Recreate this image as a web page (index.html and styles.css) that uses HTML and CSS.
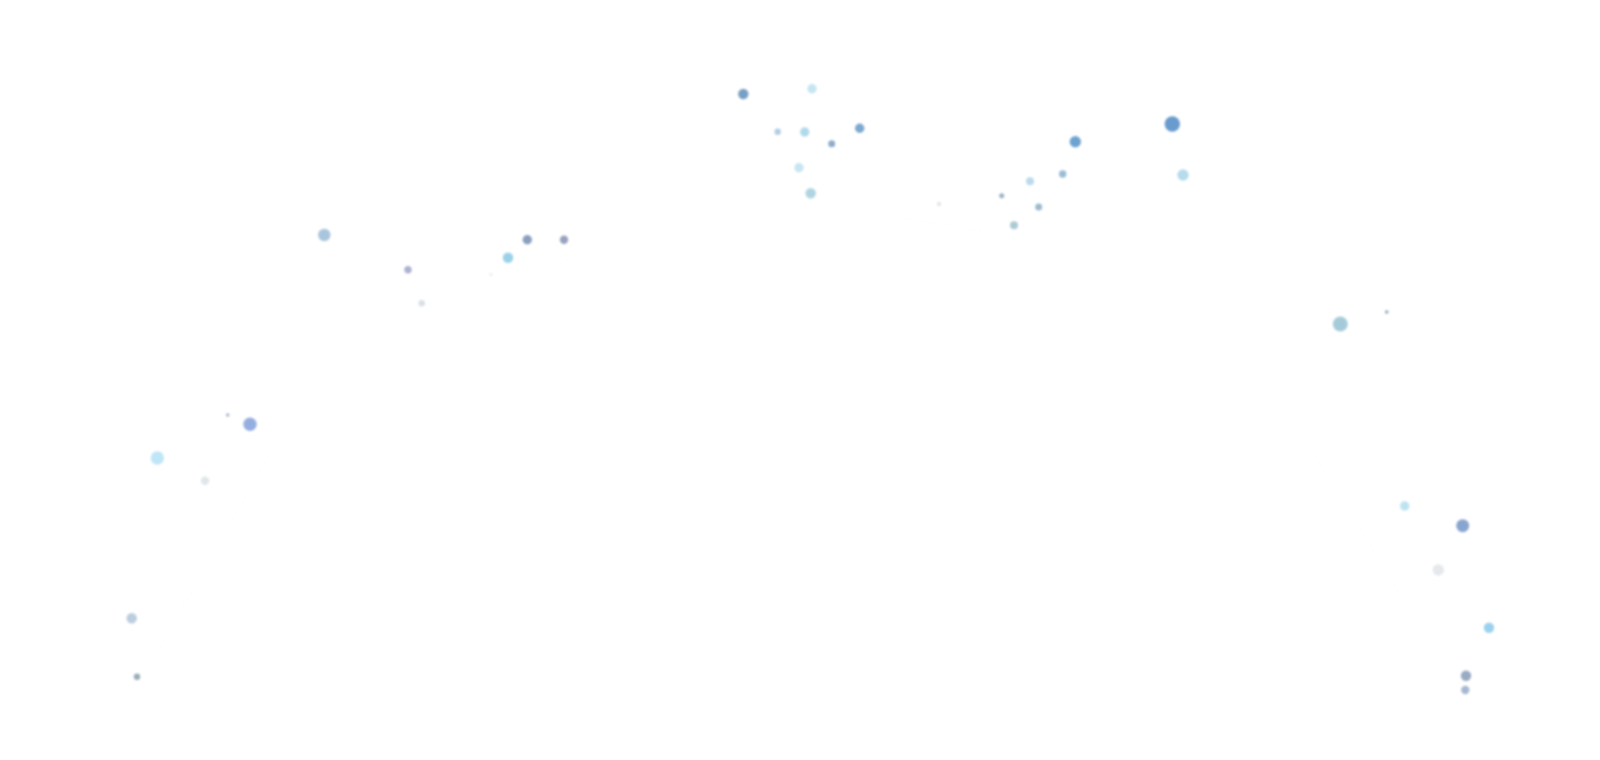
FILE: index.html
```html
<!DOCTYPE html>
<html lang="en">
<head>
<meta charset="utf-8">
<title>Particles</title>
<link rel="stylesheet" href="styles.css">
</head>
<body>
<main class="stage">
<svg class="field" width="1600" height="760" viewBox="0 0 1600 760" xmlns="http://www.w3.org/2000/svg">
  <defs>
    <filter id="soft" x="-50%" y="-50%" width="200%" height="200%">
      <feGaussianBlur stdDeviation="1.05"/>
    </filter>
  </defs>
  <g class="links">
    <line x1="270" y1="453" x2="147" y2="670"/>
    <line x1="1297" y1="427" x2="1428" y2="640"/>
    <line x1="900" y1="218" x2="993" y2="233"/>
    <line x1="557" y1="267" x2="577" y2="253"/>
  </g>
  <g class="dots" filter="url(#soft)">
    <circle cx="743.3" cy="94" r="5.2" fill="#6a96c0"/>
    <circle cx="812" cy="88.7" r="4.7" fill="#bfe3f0"/>
    <circle cx="777.7" cy="131.7" r="3.2" fill="#a9c8e0"/>
    <circle cx="804.7" cy="132" r="4.7" fill="#a8d6ea"/>
    <circle cx="831.7" cy="143.7" r="3.5" fill="#7ea4c8"/>
    <circle cx="859.7" cy="128.3" r="4.7" fill="#6f9fcb"/>
    <circle cx="799" cy="167.7" r="4.7" fill="#c3e3ef"/>
    <circle cx="810.7" cy="193.3" r="5.2" fill="#a8d0de"/>

    <circle cx="1172.3" cy="124" r="7.7" fill="#5a91c9"/>
    <circle cx="1075.3" cy="141.7" r="5.7" fill="#5f9acb"/>
    <circle cx="1183" cy="175" r="5.7" fill="#aed8ea"/>
    <circle cx="1062.7" cy="174" r="3.7" fill="#8fb5d0"/>
    <circle cx="1030" cy="181.3" r="4" fill="#b3d6ea"/>
    <circle cx="1001.7" cy="195.7" r="2.5" fill="#8fa9bf"/>
    <circle cx="1038.7" cy="207" r="3.5" fill="#8fb2cc"/>
    <circle cx="1014" cy="225.3" r="4" fill="#a4c4d0"/>
    <circle cx="939" cy="204" r="2.2" fill="#e4e4e4"/>

    <circle cx="324.3" cy="235" r="6.2" fill="#a0bfd8"/>
    <circle cx="408" cy="269.7" r="3.7" fill="#a4a9cc"/>
    <circle cx="421.7" cy="303.3" r="3.2" fill="#d4dde4"/>
    <circle cx="508" cy="257.7" r="5.2" fill="#8fcde4"/>
    <circle cx="527.3" cy="239.7" r="4.7" fill="#7e95b6"/>
    <circle cx="564" cy="239.7" r="4.2" fill="#8c9ab8"/>
    <circle cx="491" cy="274.7" r="1.4" fill="#e6ead8"/>

    <circle cx="250" cy="424.3" r="6.7" fill="#8aa6dc"/>
    <circle cx="227.7" cy="415" r="1.8" fill="#9fb0c8"/>
    <circle cx="157.3" cy="458" r="6.7" fill="#b8e4f6"/>
    <circle cx="205" cy="480.7" r="4.2" fill="#dde4e8"/>
    <circle cx="131.7" cy="618.3" r="5.2" fill="#b5c8da"/>
    <circle cx="137" cy="676.7" r="3.2" fill="#8ea6b0"/>

    <circle cx="1340.3" cy="324" r="7.5" fill="#9cc6d6"/>
    <circle cx="1386.7" cy="312" r="1.8" fill="#8aa0b8"/>
    <circle cx="1404.7" cy="506" r="4.7" fill="#b8e0ef"/>
    <circle cx="1462.7" cy="525.7" r="6.5" fill="#7c9ccb"/>
    <circle cx="1438.3" cy="570" r="5.7" fill="#e3e6ea"/>
    <circle cx="1489" cy="627.7" r="5.2" fill="#92ccec"/>
    <circle cx="1466" cy="675.7" r="5.2" fill="#8ea2bc"/>
    <circle cx="1465.3" cy="690" r="4.2" fill="#9db2cc"/>
  </g>
</svg>
</main>
</body>
</html>
```

FILE: styles.css
```css
html, body {
  margin: 0;
  padding: 0;
  background: #ffffff;
  overflow: hidden;
}

.stage {
  width: 1600px;
  height: 760px;
  display: block;
}

.field {
  display: block;
}

.dots {
  opacity: 0.9;
}

.links line {
  stroke: #f6f4e8;
  stroke-width: 1;
  stroke-dasharray: 2 3;
  opacity: 0.35;
}
```
